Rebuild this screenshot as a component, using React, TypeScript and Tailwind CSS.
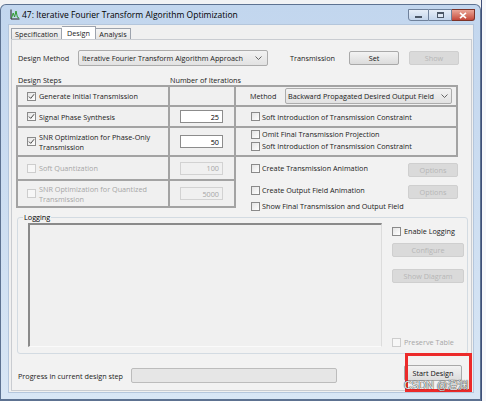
import React from "react";

type CheckProps = { checked?: boolean; disabled?: boolean };

// small win7 style checkbox
const CheckBox = ({ checked = false, disabled = false }: CheckProps) => (
  <span
    className={
      disabled
        ? "flex h-[9px] w-[9px] shrink-0 border border-[#cdcdcd] bg-[#f7f7f7]"
        : "flex h-[9px] w-[9px] shrink-0 items-center justify-center border border-[#8a8a8a] bg-linear-to-br from-[#e4e4e4] to-white"
    }
  >
    {checked && (
      <svg viewBox="0 0 9 9" className="h-[7px] w-[7px]">
        <path d="M1.2 4.6 L3.5 6.9 L7.8 1.6" fill="none" stroke="#3a3a3a" strokeWidth="1.2" />
      </svg>
    )}
  </span>
);

type CheckRowProps = CheckProps & { label: string };

const CheckRow = ({ label, checked, disabled }: CheckRowProps) => (
  <div className="flex h-[10px] items-center gap-[2px]">
    <CheckBox checked={checked} disabled={disabled} />
    <span className={disabled ? "whitespace-nowrap text-[#a6a6a6]" : "whitespace-nowrap"}>{label}</span>
  </div>
);

type BtnProps = { children: React.ReactNode; disabled?: boolean; size: string };

const WinButton = ({ children, disabled = false, size }: BtnProps) => (
  <div
    className={`flex shrink-0 items-center justify-center rounded-[2px] border ${size} ${
      disabled
        ? "border-[#cfcfcf] bg-[#dadada] text-[#b6b6b6]"
        : "border-[#a9a9a9] bg-linear-to-b from-[#f3f3f3] to-[#dcdcdc] text-[#111]"
    }`}
  >
    {children}
  </div>
);

const NumBox = ({ value, disabled = false }: { value: string; disabled?: boolean }) => (
  <div
    className={
      disabled
        ? "flex h-[13px] w-[43px] items-center justify-end border border-[#d2d2d2] bg-[#f0f0f0] pr-[3px] text-[#a6a6a6]"
        : "flex h-[13px] w-[43px] items-center justify-end border border-[#8c8c8c] bg-white pr-[3px] text-black"
    }
  >
    {value}
  </div>
);

const Chevron = () => (
  <svg viewBox="0 0 7 4" className="h-[4px] w-[7px] shrink-0">
    <path d="M0.5 0.5 L3.5 3.5 L6.5 0.5" fill="none" stroke="#555" strokeWidth="0.9" />
  </svg>
);

const AppIcon = () => (
  <svg viewBox="0 0 10 11" className="h-[11px] w-[10px]">
    <path d="M1 0.5 V10 H9.5" fill="none" stroke="#222" strokeWidth="1" />
    <path d="M1.5 9 L3.2 4 L4.6 8 L6 2 L7.4 8.2 L9 9" fill="none" stroke="#2e9a2e" strokeWidth="1" />
  </svg>
);

export default function App() {
  return (
    <div className="relative flex h-[401px] w-[486px] overflow-hidden bg-[#f1f2f4] font-['Open_Sans',sans-serif] text-[7.25px] leading-[10px] text-[#1a1a1a]">
      {/* window */}
      <div className="mt-[4px] flex h-[397px] w-[481px] shrink-0 flex-col rounded-t-[6px] border border-b-2 border-[#5d7291] bg-linear-to-b from-[#c2d6ee] to-[#d8e6f5]">
        {/* title bar */}
        <div className="flex h-[19px] shrink-0 items-start">
          <div className="ml-[9px] mt-[4px] flex items-center gap-[2px]">
            <AppIcon />
            <span className="whitespace-nowrap pt-[1px] text-[8.5px] text-black">
              47: Iterative Fourier Transform Algorithm Optimization
            </span>
          </div>
          <div className="ml-auto mr-[5px] mt-[4px] flex">
            <div className="flex h-[12px] w-[21px] items-center justify-center rounded-bl-[3px] border border-[#6f819b] bg-linear-to-b from-[#e6eef8] to-[#c3d5eb]">
              <span className="mt-[3px] h-[2px] w-[7px] border border-[#4a5666] bg-white" />
            </div>
            <div className="flex h-[12px] w-[23px] items-center justify-center border border-l-0 border-[#6f819b] bg-linear-to-b from-[#e6eef8] to-[#c3d5eb]">
              <span className="h-[6px] w-[7px] border border-t-2 border-[#4a5666] bg-[#dfe8f4]" />
            </div>
            <div className="flex h-[12px] w-[23px] items-center justify-center rounded-br-[3px] border border-l-0 border-[#7c3328] bg-linear-to-b from-[#eaa698] to-[#c4473a]">
              <svg viewBox="0 0 8 7" className="h-[7px] w-[8px]">
                <path d="M1 0.8 L7 6.2 M7 0.8 L1 6.2" stroke="#fff" strokeWidth="1.6" />
              </svg>
            </div>
          </div>
        </div>

        {/* client area */}
        <div className="ml-[7px] flex h-[369px] w-[466px] shrink-0 flex-col border border-[#b4c6dc] bg-[#f0f0f0] pl-[2px] pt-[1px]">
          {/* tabs */}
          <div className="flex h-[13px] items-end">
            <div className="flex h-[11px] w-[51px] items-center justify-center border border-b-0 border-[#9da3ad] bg-linear-to-b from-[#f4f4f4] to-[#e6e6e6]">
              Specification
            </div>
            <div className="flex h-[13px] w-[34px] items-start justify-center border border-b-0 border-l-0 border-[#9da3ad] bg-white pt-[1px]">
              Design
            </div>
            <div className="flex h-[11px] w-[35px] items-center justify-center border border-b-0 border-l-0 border-[#9da3ad] bg-linear-to-b from-[#f4f4f4] to-[#e6e6e6]">
              Analysis
            </div>
          </div>

          {/* tab panel */}
          <div className="flex h-[352px] w-[461px] flex-col border border-[#c9ccd1] bg-[#f2f2f2]">
            {/* design method row */}
            <div className="mt-[10px] flex h-[16px] items-center pl-[6px]">
              <span className="w-[60px] whitespace-nowrap">Design Method</span>
              <div className="flex h-[16px] w-[190px] items-center justify-between rounded-[2px] border border-[#acacac] bg-linear-to-b from-[#f2f2f2] to-[#e2e2e2] pl-[3px] pr-[5px]">
                <span className="whitespace-nowrap">Iterative Fourier Transform Algorithm Approach</span>
                <Chevron />
              </div>
              <span className="ml-[22px] w-[59px] whitespace-nowrap">Transmission</span>
              <WinButton size="h-[14px] w-[50px]">Set</WinButton>
              <div className="ml-[10px]">
                <WinButton size="h-[14px] w-[50px]" disabled>
                  Show
                </WinButton>
              </div>
            </div>

            {/* column headers */}
            <div className="mt-[9px] flex h-[10px] pl-[6px]">
              <span className="w-[152px]">Design Steps</span>
              <span>Number of Iterations</span>
            </div>

            {/* steps table */}
            <div className="flex items-start pl-[4px]">
              <div className="grid grid-cols-[150px_64px] grid-rows-[18px_19px_27px_22px_25px] gap-[2px] bg-[#a3a3a3] p-[2px]">
                <div className="flex items-center gap-[3px] bg-[#f0f0f0] pl-[9px]">
                  <CheckBox checked />
                  <span>Generate Initial Transmission</span>
                </div>
                <div className="bg-[#f0f0f0]" />

                <div className="flex items-center gap-[3px] bg-[#f0f0f0] pl-[9px]">
                  <CheckBox checked />
                  <span>Signal Phase Synthesis</span>
                </div>
                <div className="flex items-center bg-[#f0f0f0] pl-[10px]">
                  <NumBox value="25" />
                </div>

                <div className="flex items-center gap-[3px] bg-[#f0f0f0] pl-[9px]">
                  <CheckBox checked />
                  <span>
                    SNR Optimization for Phase-Only
                    <br />
                    Transmission
                  </span>
                </div>
                <div className="flex items-center bg-[#f0f0f0] pl-[10px]">
                  <NumBox value="50" />
                </div>

                <div className="flex items-center gap-[3px] bg-[#f0f0f0] pl-[9px] text-[#a6a6a6]">
                  <CheckBox disabled />
                  <span>Soft Quantization</span>
                </div>
                <div className="flex items-center bg-[#f0f0f0] pl-[10px]">
                  <NumBox value="100" disabled />
                </div>

                <div className="flex items-center gap-[3px] bg-[#f0f0f0] pl-[9px] text-[#a6a6a6]">
                  <CheckBox disabled />
                  <span>
                    SNR Optimization for Quantized
                    <br />
                    Transmission
                  </span>
                </div>
                <div className="flex items-center bg-[#f0f0f0] pl-[10px]">
                  <NumBox value="5000" disabled />
                </div>
              </div>

              {/* options column */}
              <div className="flex w-[222px] flex-col">
                <div className="grid grid-rows-[18px_19px_27px] gap-[2px] bg-[#a3a3a3] py-[2px] pr-[2px]">
                  <div className="flex items-center bg-[#f0f0f0] pl-[14px]">
                    <span className="w-[35px]">Method</span>
                    <div className="flex h-[16px] w-[167px] items-center justify-between overflow-hidden rounded-[2px] border border-[#acacac] bg-linear-to-b from-[#f2f2f2] to-[#e2e2e2] pl-[2px] pr-[3px]">
                      <span className="w-[151px] overflow-hidden whitespace-nowrap">
                        Backward Propagated Desired Output Field
                      </span>
                      <Chevron />
                    </div>
                  </div>
                  <div className="flex items-center bg-[#f0f0f0] pl-[15px]">
                    <CheckRow label="Soft Introduction of Transmission Constraint" />
                  </div>
                  <div className="flex flex-col gap-[2px] bg-[#f0f0f0] pl-[15px] pt-[1px]">
                    <CheckRow label="Omit Final Transmission Projection" />
                    <CheckRow label="Soft Introduction of Transmission Constraint" />
                  </div>
                </div>

                <div className="flex flex-col pl-[15px]">
                  <div className="mt-[6px] flex h-[14px] items-start">
                    <div className="w-[158px]">
                      <CheckRow label="Create Transmission Animation" />
                    </div>
                    <WinButton size="h-[14px] w-[50px]" disabled>
                      Options
                    </WinButton>
                  </div>
                  <div className="mt-[8px] flex h-[14px] items-start">
                    <div className="w-[158px]">
                      <CheckRow label="Create Output Field Animation" />
                    </div>
                    <WinButton size="h-[14px] w-[50px]" disabled>
                      Options
                    </WinButton>
                  </div>
                  <div className="mt-[2px]">
                    <CheckRow label="Show Final Transmission and Output Field" />
                  </div>
                </div>
              </div>
            </div>

            {/* logging group */}
            <fieldset className="ml-[5px] mt-[1px] h-[142px] w-[451px] rounded-[3px] border border-[#d3dbe2]">
              <legend className="ml-[5px] px-[1px] leading-[10px] text-black">Logging</legend>
              <div className="mt-[1px] flex">
                <div className="ml-[10px] h-[124px] w-[354px] border-2 border-b border-r border-t-2 border-l-[#8a8a8a] border-t-[#8a8a8a] border-r-[#dcdcdc] border-b-[#fafafa] bg-[#f0f0f0]" />
                <div className="ml-[10px] flex h-[124px] w-[72px] flex-col">
                  <div className="mt-[3px] flex h-[10px] items-center gap-[3px]">
                    <CheckBox />
                    <span className="whitespace-nowrap">Enable Logging</span>
                  </div>
                  <div className="mt-[7px]">
                    <WinButton size="h-[14px] w-[72px]" disabled>
                      Configure
                    </WinButton>
                  </div>
                  <div className="mt-[12px]">
                    <WinButton size="h-[14px] w-[72px]" disabled>
                      Show Diagram
                    </WinButton>
                  </div>
                  <div className="mt-auto flex h-[10px] items-center gap-[3px]">
                    <CheckBox disabled />
                    <span className="whitespace-nowrap text-[#a6a6a6]">Preserve Table</span>
                  </div>
                </div>
              </div>
            </fieldset>

            {/* progress row */}
            <div className="mt-[11px] flex items-start pl-[6px]">
              <span className="mt-[6px] w-[113px] whitespace-nowrap">Progress in current design step</span>
              <div className="mt-[3px] h-[15px] w-[206px] rounded-[2px] border border-[#bcbcbc] bg-[#e6e6e6]" />
              <div className="ml-[67px]">
                <WinButton size="h-[16px] w-[58px]">Start Design</WinButton>
              </div>
            </div>
          </div>
        </div>
      </div>

      {/* neighbouring window edge */}
      <div className="h-[401px] w-[5px] border-l border-[#3f4f78] bg-[#f7f8fa]" />

      {/* highlight and watermark over the screenshot */}
      <div className="absolute left-[405px] top-[353px] h-[39px] w-[67px] border-[3px] border-[#ec2a2a]" />
      <div className="absolute left-[404px] top-[379px] whitespace-nowrap font-['Liberation_Sans','Noto_Sans_CJK_SC',sans-serif] text-[10.5px] leading-[12px] text-[#f4f4f4] [text-shadow:0_0_1px_#222,0_0_1px_#222]">
        CSDN @澄渊
      </div>
    </div>
  );
}
